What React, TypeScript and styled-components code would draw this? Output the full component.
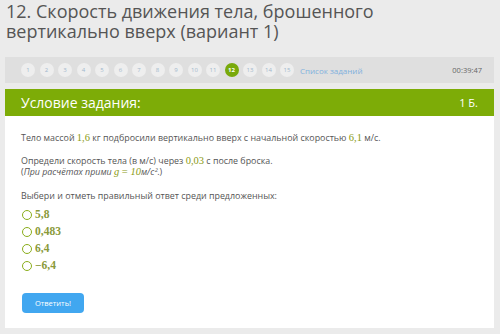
import React, { useState } from 'react';
import styled, { createGlobalStyle } from 'styled-components';

const GlobalStyle = createGlobalStyle`
  html, body {
    margin: 0;
    padding: 0;
    background: #ebebeb;
    font-family: 'Open Sans', 'Liberation Sans', sans-serif;
  }
`;

const Page = styled.div`
  width: 500px;
  height: 334px;
  padding: 0 6px 0 5px;
  box-sizing: border-box;
  overflow: hidden;
`;

const Title = styled.h1`
  margin: 0;
  padding: 1px 0 0 1px;
  height: 57px;
  font-size: 18px;
  line-height: 20px;
  font-weight: 400;
  color: #555;
  box-sizing: border-box;
`;

const NavBar = styled.div`
  display: flex;
  align-items: center;
  height: 26px;
  background: #dfdfdf;
  padding: 0 12px 0 16px;
`;

const Steps = styled.div`
  display: flex;
  align-items: center;
  gap: 4.5px;
`;

const Step = styled.div<{ $active?: boolean }>`
  width: 14px;
  height: 14px;
  border-radius: 50%;
  display: flex;
  align-items: center;
  justify-content: center;
  font-size: 6px;
  background: ${p => (p.$active ? '#78a90a' : '#eeeeee')};
  color: ${p => (p.$active ? '#fff' : '#9fb7cc')};
  font-weight: ${p => (p.$active ? 700 : 400)};
`;

const ListLink = styled.span`
  margin-left: 6px;
  font-size: 8px;
  color: #7fb1de;
`;

const Timer = styled.span`
  margin-left: auto;
  font-size: 7.5px;
  color: #666;
`;

const Task = styled.div`
  margin-top: 6px;
  background: #fff;
`;

const Header = styled.div`
  display: flex;
  align-items: center;
  justify-content: space-between;
  height: 27px;
  background: #7dac07;
  color: #fff;
  padding: 0 16px 0 16px;
  font-size: 14px;
`;

const Points = styled.span`
  font-size: 11px;
`;

const Body = styled.div`
  padding: 16px 16px 15px 16px;
  font-size: 8.9px;
  line-height: 11px;
  color: #555;
`;

const Para = styled.p<{ $gap?: number }>`
  margin: 0 0 ${p => p.$gap ?? 11}px 0;
`;

const Line = styled.span`
  display: block;
`;

const Num = styled.span`
  font-family: 'Liberation Serif', 'DejaVu Serif', serif;
  font-size: 10.5px;
  line-height: 1;
  color: #8a9a14;
`;

const Italic = styled.span`
  font-style: italic;
`;

const Options = styled.div`
  display: flex;
  flex-direction: column;
  gap: 6px;
  margin-top: 9px;
`;

const Option = styled.label`
  display: flex;
  align-items: center;
  gap: 3px;
  height: 11px;
  cursor: pointer;
`;

const Radio = styled.span<{ $checked?: boolean }>`
  width: 8px;
  height: 8px;
  border: 1.3px solid #8aad1a;
  border-radius: 50%;
  margin-left: 1px;
  background: ${p => (p.$checked ? '#8aad1a' : '#fff')};
`;

const Answer = styled.span`
  font-family: 'Liberation Serif', 'DejaVu Serif', serif;
  font-size: 11.5px;
  line-height: 1;
  font-weight: 700;
  color: #8a9a3a;
`;

const Submit = styled.button`
  margin-top: 21px;
  margin-left: 1px;
  width: 62px;
  height: 20px;
  border: none;
  border-radius: 4px;
  background: #41a7f0;
  color: #fff;
  font-family: 'Open Sans', 'Liberation Sans', sans-serif;
  font-size: 7.5px;
  padding: 0;
`;

const answers = ['5,8', '0,483', '6,4', '−6,4'];

const App = () => {
  const [selected, setSelected] = useState<number | null>(null);
  const steps = Array.from({ length: 15 }, (_, i) => i + 1);

  return (
    <Page>
      <GlobalStyle />
      <Title>
        12. Скорость движения тела, брошенного
        <br />
        вертикально вверх (вариант 1)
      </Title>
      <NavBar>
        <Steps>
          {steps.map(n => (
            <Step key={n} $active={n === 12}>
              {n}
            </Step>
          ))}
        </Steps>
        <ListLink>Список заданий</ListLink>
        <Timer>00:39:47</Timer>
      </NavBar>
      <Task>
        <Header>
          <span>Условие задания:</span>
          <Points>1 Б.</Points>
        </Header>
        <Body>
          <Para>
            Тело массой <Num>1,6</Num> кг подбросили вертикально вверх с начальной скоростью <Num>6,1</Num> м/с.
          </Para>
          <Para $gap={12}>
            <Line>
              Определи скорость тела (в м/с) через <Num>0,03</Num> с после броска.
            </Line>
            <Line>
              (<Italic>При расчётах прими</Italic> <Num><i>g</i> = <i>10</i></Num>
              <Italic>м/с²</Italic>.)
            </Line>
          </Para>
          <Para $gap={0}>Выбери и отметь правильный ответ среди предложенных:</Para>
          <Options>
            {answers.map((a, i) => (
              <Option key={a} onClick={() => setSelected(i)}>
                <Radio $checked={selected === i} />
                <Answer>{a}</Answer>
              </Option>
            ))}
          </Options>
          <Submit>Ответить!</Submit>
        </Body>
      </Task>
    </Page>
  );
};

export default App;
